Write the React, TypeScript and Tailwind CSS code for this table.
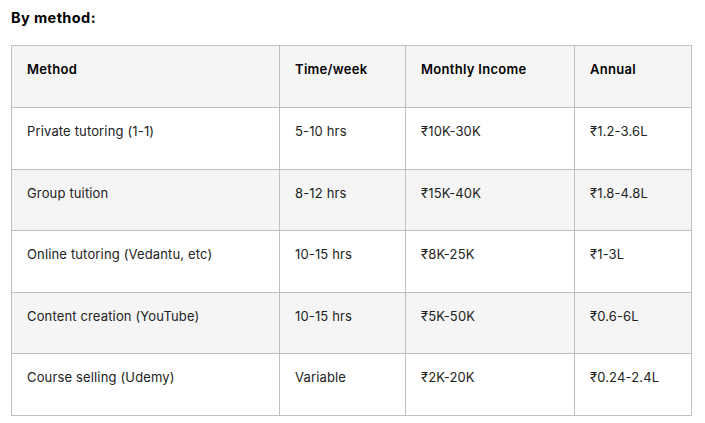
const rows = [
  ["Private tutoring (1-1)", "5-10 hrs", "₹10K-30K", "₹1.2-3.6L"],
  ["Group tuition", "8-12 hrs", "₹15K-40K", "₹1.8-4.8L"],
  ["Online tutoring (Vedantu, etc)", "10-15 hrs", "₹8K-25K", "₹1-3L"],
  ["Content creation (YouTube)", "10-15 hrs", "₹5K-50K", "₹0.6-6L"],
  ["Course selling (Udemy)", "Variable", "₹2K-20K", "₹0.24-2.4L"],
];

export default function App() {
  return (
    <div
      className="min-h-screen bg-white px-[11px] pt-[8px] text-[#111]"
      style={{ fontFamily: "Inter, 'Open Sans', sans-serif" }}
    >
      <h3 className="text-[14.5px] leading-[20px] font-bold tracking-[0.4px] text-black">By method:</h3>
      <table className="mt-[17px] w-[681px] border-collapse text-[13px]">
        <colgroup>
          <col className="w-[268px]" />
          <col className="w-[126px]" />
          <col className="w-[169px]" />
          <col className="w-[117px]" />
        </colgroup>
        <thead>
          <tr className="h-[62px] bg-[#f5f5f5]">
            {["Method", "Time/week", "Monthly Income", "Annual"].map((h) => (
              <th
                key={h}
                className="border border-[#bfbfbf] px-[15px] pt-[12px] text-left align-top leading-[22px] font-semibold tracking-[0.3px] text-black"
              >
                {h}
              </th>
            ))}
          </tr>
        </thead>
        <tbody>
          {rows.map((r, i) => (
            <tr key={r[0]} className={i % 2 === 1 ? "h-[61.6px] bg-[#f5f5f5]" : "h-[61.6px] bg-white"}>
              {r.map((c, j) => (
                <td
                  key={j}
                  className="border border-[#bfbfbf] px-[15px] pt-[12px] align-top leading-[22px] tracking-[0.15px] text-[#222]"
                >
                  {c}
                </td>
              ))}
            </tr>
          ))}
        </tbody>
      </table>
    </div>
  );
}
